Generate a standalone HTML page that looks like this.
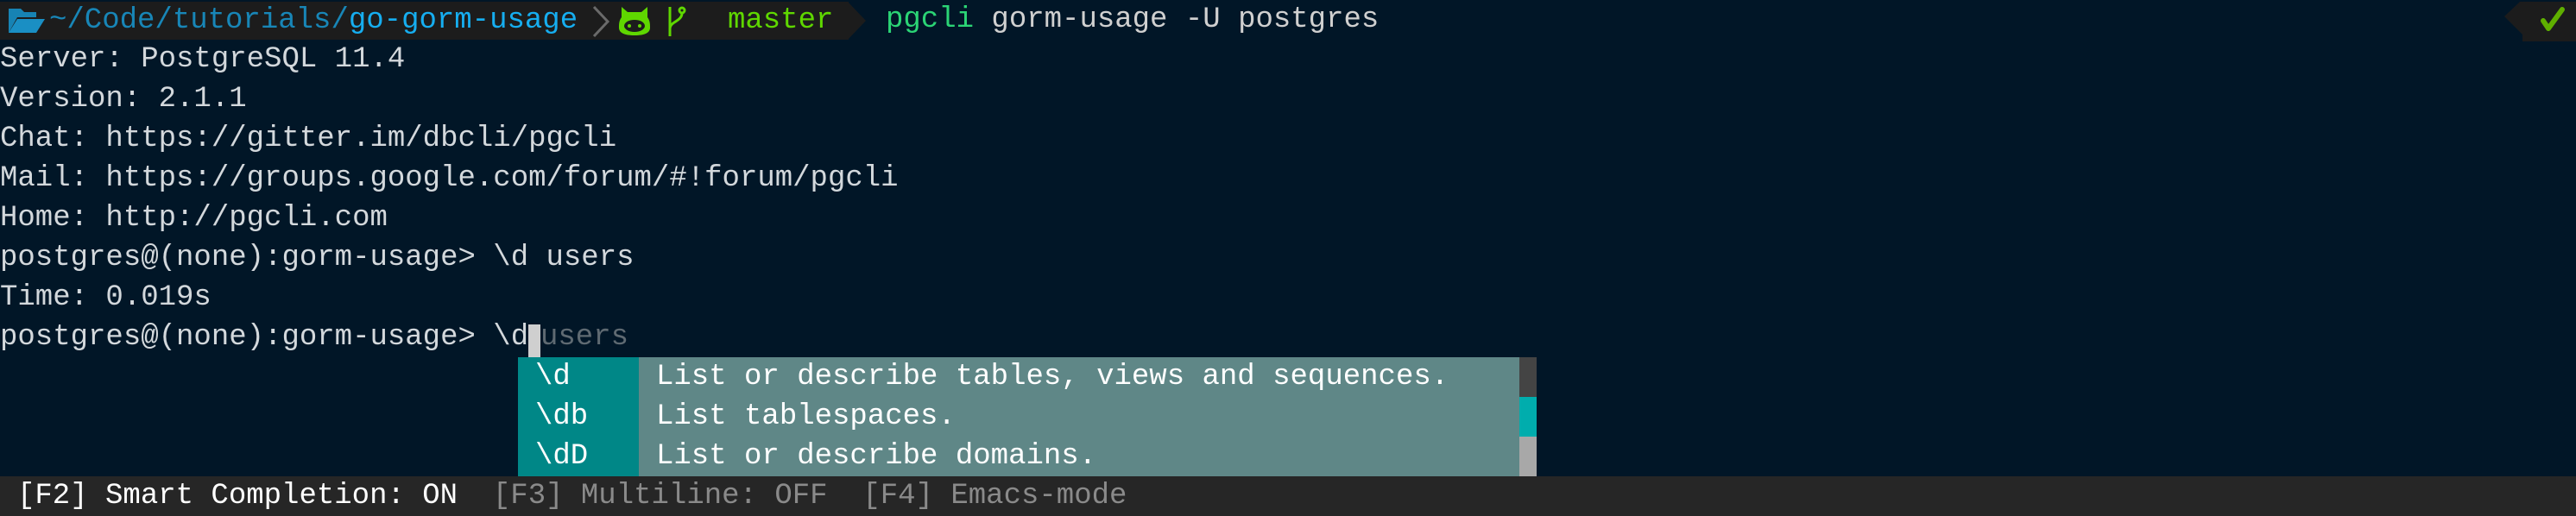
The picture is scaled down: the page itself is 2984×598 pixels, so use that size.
<!DOCTYPE html>
<html><head><meta charset="utf-8"><style>
html,body{margin:0;padding:0;width:2984px;height:598px;overflow:hidden;background:#011627;}
body{position:relative;font-family:"Liberation Mono","DejaVu Sans Mono",monospace;font-size:34px;color:#d3d8dc;}
.r{position:absolute;left:0;height:46px;line-height:46px;white-space:pre;}
.a{position:absolute;white-space:pre;line-height:46px;height:46px;}
</style></head><body>
<!-- top bar -->
<div style="position:absolute;left:0;top:2px;width:983px;height:44px;background:#1c1c1c"></div>
<svg style="position:absolute;left:982px;top:2px" width="24" height="44"><polygon points="0,0 21,22 0,44" fill="#1c1c1c"/></svg>
<svg style="position:absolute;left:8px;top:8px" width="46" height="32" viewBox="0 0 46 32"><path d="M2 2h14l4 4h14v6H12L2 30z" fill="#1783b4"/><path d="M12 14h32L34 30H2z" fill="#1a8fc4"/></svg>
<div class="a" style="left:57px;top:1px;color:#1886b7">~/Code/tutorials/<span style="color:#16aef0">go-gorm-usage</span></div>
<svg style="position:absolute;left:684px;top:6px" width="26" height="38"><polyline points="4,2 20,19 4,36" fill="none" stroke="#6a6a6a" stroke-width="3"/></svg>
<svg style="position:absolute;left:716px;top:6px" width="38" height="36" viewBox="0 0 38 36"><path d="M4 2l7 6h16l7-6v12c3 4 3 8 3 12 0 6-6 9-18 9S1 32 1 26c0-4 0-8 3-12z" fill="#5fd700"/><ellipse cx="19" cy="24" rx="12" ry="7" fill="#1c1c1c"/><circle cx="13" cy="24" r="2" fill="#5fd700"/><circle cx="25" cy="24" r="2" fill="#5fd700"/></svg>
<svg style="position:absolute;left:770px;top:6px" width="26" height="38" viewBox="0 0 26 38"><g fill="none" stroke="#5fd700" stroke-width="3"><line x1="6" y1="2" x2="6" y2="36"/><circle cx="20" cy="6" r="3"/><path d="M20 9c0 10-14 10-14 18"/></g></svg>
<div class="a" style="left:843px;top:1px;color:#5fd700">master</div>
<div class="a" style="left:1026px;top:0;color:#2bd475">pgcli <span style="color:#d0d0d0">gorm-usage -U postgres</span></div>
<!-- right check -->
<svg style="position:absolute;left:2900px;top:2px" width="84" height="46"><polygon points="1,17 19,0 84,0 84,46 22,46 22,38" fill="#1c1c1c"/><path d="M46 22l6 9 16-22" fill="none" stroke="#5faf00" stroke-width="6" stroke-linecap="round" stroke-linejoin="round"/></svg>
<!-- output -->
<div class="r" style="top:46px">Server: PostgreSQL 11.4</div>
<div class="r" style="top:92px">Version: 2.1.1</div>
<div class="r" style="top:138px">Chat: https://gitter.im/dbcli/pgcli</div>
<div class="r" style="top:184px">Mail: https://groups.google.com/forum/#!forum/pgcli</div>
<div class="r" style="top:230px">Home: http://pgcli.com</div>
<div class="r" style="top:276px">postgres@(none):gorm-usage&gt; \d users</div>
<div class="r" style="top:322px">Time: 0.019s</div>
<div class="r" style="top:368px">postgres@(none):gorm-usage&gt; \d</div>
<div style="position:absolute;left:612px;top:376px;width:14px;height:38px;background:#cfcfcf"></div>
<div class="a" style="left:626px;top:368px;color:#5f6a72">users</div>
<!-- popup -->
<div style="position:absolute;left:600px;top:414px;width:140px;height:138px;background:#008787"></div>
<div style="position:absolute;left:740px;top:414px;width:1020px;height:138px;background:#5f8787"></div>
<div style="position:absolute;left:1760px;top:414px;width:20px;height:46px;background:#444"></div>
<div style="position:absolute;left:1760px;top:460px;width:20px;height:46px;background:#00adad"></div>
<div style="position:absolute;left:1760px;top:506px;width:20px;height:46px;background:#a8a8a8"></div>
<div class="a" style="left:620px;top:414px;color:#fff">\d</div>
<div class="a" style="left:620px;top:460px;color:#fff">\db</div>
<div class="a" style="left:620px;top:506px;color:#fff">\dD</div>
<div class="a" style="left:760px;top:414px;color:#fff">List or describe tables, views and sequences.</div>
<div class="a" style="left:760px;top:460px;color:#fff">List tablespaces.</div>
<div class="a" style="left:760px;top:506px;color:#fff">List or describe domains.</div>
<!-- status -->
<div style="position:absolute;left:0;top:552px;width:2984px;height:46px;background:#262626"></div>
<div class="a" style="left:20px;top:552px;color:#fff">[F2] Smart Completion: ON  <span style="color:#8a8a8a">[F3] Multiline: OFF  [F4] Emacs-mode</span></div>
</body></html>
